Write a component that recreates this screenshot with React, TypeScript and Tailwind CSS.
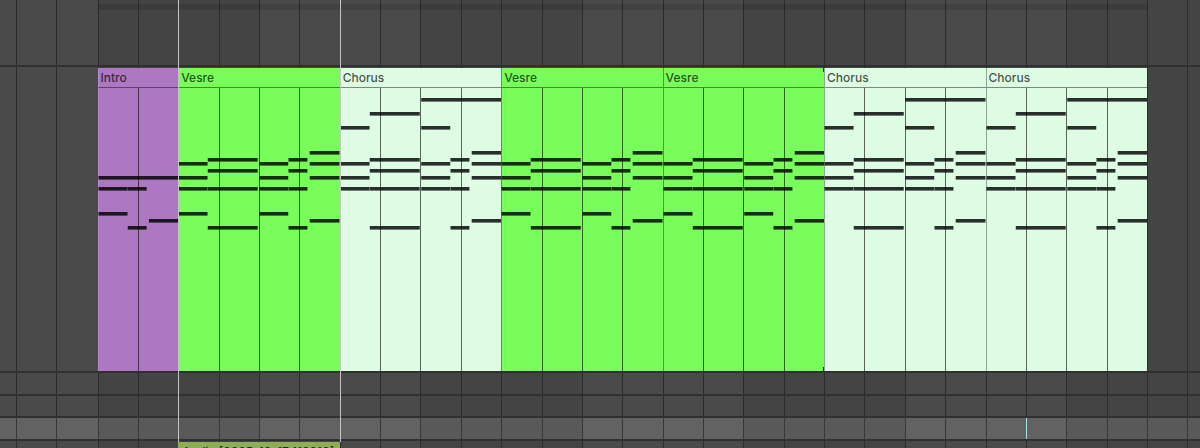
import type { ReactNode } from 'react';

type Note = [pitchY: number, start: number, end: number];

type ClipKind = 'intro' | 'verse' | 'chorus';

type Clip = {
  kind: ClipKind;
  name: string;
  bars: number;
};

// start / end are sixteenths, four bars = 64
const CHORDS: Note[] = [
  [65, 52, 64],
  [72, 12, 32],
  [72, 44, 52],
  [76, 0, 12],
  [76, 32, 44],
  [76, 52, 64],
  [83, 12, 32],
  [83, 44, 52],
  [90, 0, 12],
  [90, 32, 44],
  [90, 52, 64],
  [101, 0, 12],
  [101, 12, 32],
  [101, 32, 44],
  [101, 44, 52],
  [133, 52, 64],
  [140, 12, 32],
  [140, 44, 52],
];

const NOTES: Record<ClipKind, Note[]> = {
  intro: [
    [90, 0, 32],
    [101, 0, 12],
    [101, 12, 20],
    [126, 0, 12],
    [133, 20, 32],
    [140, 12, 20],
  ],
  verse: [...CHORDS, [126, 0, 12], [126, 32, 44]],
  chorus: [...CHORDS, [12, 32, 64], [26, 12, 32], [40, 0, 12], [40, 32, 44]],
};

const CLIPS: Clip[] = [
  { kind: 'intro', name: 'Intro', bars: 2 },
  { kind: 'verse', name: 'Vesre', bars: 4 },
  { kind: 'chorus', name: 'Chorus', bars: 4 },
  { kind: 'verse', name: 'Vesre', bars: 4 },
  { kind: 'verse', name: 'Vesre', bars: 4 },
  { kind: 'chorus', name: 'Chorus', bars: 4 },
  { kind: 'chorus', name: 'Chorus', bars: 4 },
];

const CLIP_FILL: Record<ClipKind, string> = {
  intro: 'bg-[#ad78c1]',
  verse: 'bg-[#78fd5a]',
  chorus: 'bg-[#defce4]',
};

const CLIP_EDGE: Record<ClipKind, string> = {
  intro: 'border-l-[#b98acb]',
  verse: 'border-l-[#46a036]',
  chorus: 'border-l-[#8fa894]',
};

const BARS = Array.from({ length: 26 }, (_, i) => i);

function isShaded(bar: number) {
  return Math.floor(bar / 4) % 2 === 0;
}

function Timeline({ children }: { children: ReactNode }) {
  return (
    <div className="col-start-1 row-start-1 grid grid-cols-[195fr_2099fr_106fr]">
      <div className="col-start-2 grid min-w-0 grid-cols-26">{children}</div>
    </div>
  );
}

function GridLines({ bright = false }: { bright?: boolean }) {
  const light = bright ? 'bg-[#626262] border-[#383838]' : 'bg-[#4a4a4a] border-[#2c2c2c]';
  const dark = bright ? 'bg-[#595959] border-[#383838]' : 'bg-[#444444] border-[#2c2c2c]';
  return (
    <div className="col-start-1 row-start-1 grid grid-cols-[195fr_2099fr_106fr]">
      <div className="grid grid-cols-[16fr_40fr_42fr]">
        <div className={light} />
        <div className={`border-l ${light}`} />
        <div className={`border-l ${light}`} />
      </div>
      <div className="grid grid-cols-26">
        {BARS.map((bar) => (
          <div key={bar} className={`border-l ${isShaded(bar) ? dark : light}`} />
        ))}
      </div>
      <div className="grid grid-cols-[40fr_13fr]">
        <div className={`border-l ${dark}`} />
        <div className={`border-l ${dark}`} />
      </div>
    </div>
  );
}

function Track({ size, bright, children }: { size: string; bright?: boolean; children?: ReactNode }) {
  return (
    <section className={`grid shrink-0 border-b-2 border-[#303030] ${size}`}>
      <GridLines bright={bright} />
      {children}
    </section>
  );
}

function MidiClip({ clip }: { clip: Clip }) {
  const span = clip.bars === 2 ? 'col-span-2' : 'col-span-4';
  const columns = clip.bars === 2 ? 'grid-cols-2' : 'grid-cols-4';
  const units = clip.bars * 16;
  const edge = CLIP_EDGE[clip.kind];
  return (
    <article className={`mt-px flex min-w-0 flex-col ${span} ${CLIP_FILL[clip.kind]}`}>
      <h2
        className={`h-5 border-b border-l border-b-black/45 pl-0.5 text-[12px] leading-[19px] font-medium text-black/70 ${edge}`}
      >
        {clip.name}
      </h2>
      <div className="grid flex-1">
        <div className={`col-start-1 row-start-1 grid ${columns}`}>
          {BARS.slice(0, clip.bars).map((bar) => (
            <div key={bar} className={`border-l ${bar > 0 ? 'border-l-black/60' : edge}`} />
          ))}
        </div>
        <svg
          className="col-start-1 row-start-1 h-[283px] w-full"
          viewBox={`0 0 ${units} 283`}
          preserveAspectRatio="none"
          aria-hidden="true"
        >
          {NOTES[clip.kind].map(([y, start, end]) => (
            <rect
              key={`${y}-${start}`}
              x={start % 16 === 12 ? start - 0.2 : start + 0.2}
              y={y - 2}
              width={end - start - (end % 16 === 0 ? 0.2 : 0.5)}
              height={3.6}
              fill="#000"
              fillOpacity={0.82}
            />
          ))}
        </svg>
      </div>
    </article>
  );
}

export default function App() {
  return (
    <main className="relative flex h-screen flex-col overflow-hidden bg-[#4a4a4a] font-['Inter',sans-serif]">
      <Track size="h-[67px]">
        <Timeline>
          <div className="col-span-full mt-1 h-1.5 bg-black/12" />
        </Timeline>
      </Track>
      <Track size="h-[306px]">
        <Timeline>
          {CLIPS.map((clip, index) => (
            <MidiClip key={index} clip={clip} />
          ))}
        </Timeline>
      </Track>
      <Track size="h-[23px]" />
      <Track size="h-[22px]" />
      <Track size="h-[23px]" bright>
        <Timeline>
          <div className="col-start-24 border-l border-[#a5e3ea]" />
        </Timeline>
      </Track>
      <Track size="h-[23px]">
        <Timeline>
          <h2 className="col-span-4 col-start-3 mt-px overflow-hidden bg-[#8dad57] pl-1 text-[12px] leading-[19px] font-medium whitespace-nowrap text-black/75">
            Audio [2025-10-17 113210]
          </h2>
        </Timeline>
      </Track>

      {/* loop selection edges */}
      <div className="pointer-events-none absolute inset-x-0 top-0 grid h-[442px]">
        <Timeline>
          <div className="col-span-4 col-start-3 border-l border-[#c4c4c4]" />
          <div className="border-l border-[#c4c4c4]" />
        </Timeline>
      </div>

      {/* clip end handles */}
      <div className="pointer-events-none absolute inset-x-0 top-[68px] grid h-[303px]">
        <Timeline>
          <div className="col-start-18 flex flex-col items-end justify-between">
            <span className="h-1 w-px bg-[#14330f]" />
            <span className="h-1 w-px bg-[#14330f]" />
          </div>
        </Timeline>
      </div>
    </main>
  );
}
